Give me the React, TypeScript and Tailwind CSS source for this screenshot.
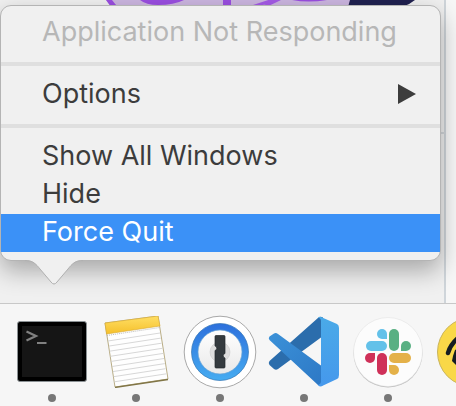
import React from "react";

const rowClass = "flex h-[38px] w-full items-center justify-between pr-6 pb-[2px] pl-[41px] text-left";

function Wallpaper() {
  return (
    <svg className="absolute top-0 left-0" width="456" height="304" aria-hidden="true">
      <rect x="446" y="0" width="10" height="304" fill="#f7f7f7" />
      <rect x="444" y="0" width="2" height="304" fill="#cfd5da" />
      <rect x="440" y="132" width="5" height="2" fill="#d3d7db" />
      <path d="M106 0 L114 10 H360 V0Z" fill="#cbb5df" />
      <path d="M106 0 H112 Q115 4 118 7 H111Z M140 0 Q146 5 158 5 Q174 5 184 0Z M223 0 H231 V7 H223Z M292 0 Q308 3 327 0Z" fill="#9a4ee0" />
      <path d="M252 7 L276 -1 M263 7 L280 -1" stroke="#a45ae6" strokeWidth="3" fill="none" />
      <path d="M350 0 H415 Q409 5 402 7 H348Z" fill="#202150" />
    </svg>
  );
}

function Separator() {
  return <hr className="my-[10px] h-1 border-0 bg-[#dfdfdf]" />;
}

function Terminal() {
  return (
    <svg width="72" height="72" viewBox="0 0 72 72" aria-hidden="true">
      <rect x="1.5" y="5.5" width="69" height="60" rx="2.5" fill="#000" stroke="#8b9194" />
      <rect x="6" y="10" width="60" height="51" fill="#151515" />
      <path d="M10.500 15.500 L20 20 L10.500 24.500" fill="none" stroke="#818181" strokeWidth="2.200" />
      <path d="M21 27 H30.500" stroke="#818181" strokeWidth="2" />
    </svg>
  );
}

function Notes() {
  const lines = [0, 1, 2, 3, 4, 5, 6, 7, 8];
  return (
    <svg width="72" height="72" viewBox="0 0 72 72" aria-hidden="true">
      <defs>
        <linearGradient id="noteTop" x1="0" y1="0" x2="0" y2="1">
          <stop offset="0" stopColor="#ffdf65" />
          <stop offset="1" stopColor="#f5c02b" />
        </linearGradient>
      </defs>
      <path d="M5 7 L58 0 L68 63 L15 71Z" fill="#fefefe" stroke="#b9ad86" />
      <path d="M15 71.500 L68 63.500" stroke="#807546" strokeWidth="1.300" />
      <path d="M5 7 L58 0 L60 10 L6.500 18Z" fill="url(#noteTop)" stroke="#d9aa31" strokeWidth=".6" />
      <path d="M7 19.500 L60 11.500" stroke="#bbb" strokeDasharray="1 1" />
      {lines.map((n) => (
        <path key={n} d="M8 25 L60 17" transform={`translate(${n * 0.8} ${n * 5.1})`} stroke="#d2d2d2" strokeWidth=".9" />
      ))}
    </svg>
  );
}

function OnePassword() {
  return (
    <svg width="74" height="74" viewBox="0 0 74 74" aria-hidden="true">
      <defs>
        <linearGradient id="ring" x1="0" y1="0" x2="0" y2="1">
          <stop offset="0" stopColor="#2d70dc" />
          <stop offset="1" stopColor="#46acf1" />
        </linearGradient>
        <linearGradient id="lock" x1="0" y1="0" x2="0" y2="1">
          <stop offset="0" stopColor="#fff" />
          <stop offset="1" stopColor="#e9e9e9" />
        </linearGradient>
      </defs>
      <circle cx="37" cy="37" r="35.800" fill="#fff" stroke="#a9a9a9" />
      <circle cx="37" cy="37" r="28.500" fill="url(#ring)" stroke="#3475b4" strokeWidth=".7" />
      <circle cx="37" cy="37" r="22" fill="url(#lock)" stroke="#68a3d4" strokeWidth=".7" />
      <circle cx="37" cy="37" r="10" fill="#dedede" stroke="#c5c5c5" strokeWidth=".5" />
      <path d="M33 20.500 H41 Q42 20.500 42 21.500 V38.500 A2.300 2.300 0 0 0 42 43 V52 Q42 53 41 53 H33 Q32 53 32 52 V35.500 A2.300 2.300 0 0 0 32 31 V21.500 Q32 20.500 33 20.500Z" fill="#343a3e" stroke="#22282b" strokeWidth=".7" />
    </svg>
  );
}

function Code() {
  return (
    <svg width="72" height="72" viewBox="0 0 72 72" aria-hidden="true">
      <defs>
        <linearGradient id="codeRight" x1="0" y1="0" x2="0" y2="1">
          <stop offset="0" stopColor="#4aaae8" />
          <stop offset="1" stopColor="#4598ec" />
        </linearGradient>
        <linearGradient id="codeBand" x1="0" y1="0" x2="1" y2="1">
          <stop offset="0" stopColor="#3b91d8" />
          <stop offset="1" stopColor="#2d78c5" />
        </linearGradient>
      </defs>
      <path d="M50.500 1.500 Q52.500 0 55 1.500 V20 L10 53 Q8 54.500 6 53 L1.500 49 Q0 47 1.500 45Z" fill="#2b6dac" />
      <path d="M1.500 24 Q0 22 1.500 20.500 L6 17.500 Q8 16.500 10 18 L55 51 V69 Q52.500 71 50 69Z" fill="url(#codeBand)" />
      <path d="M53 1 L69 8 Q71 9 71 12 V59 Q71 62 69 63 L53 70.500 Q51 70.500 50 69 Q53 68 53 66 V5 Q53 2 50 1.500 Q51 .5 53 1Z" fill="url(#codeRight)" />
    </svg>
  );
}

function Slack() {
  return (
    <svg width="72" height="72" viewBox="0 0 72 72" aria-hidden="true">
      <circle cx="36" cy="37" r="34.500" fill="#bdbdbd" />
      <circle cx="36" cy="36" r="34.500" fill="#fcfcfc" stroke="#dedede" strokeWidth=".5" />
      <g fill="#63c1e9">
        <rect x="14" y="25" width="21" height="10" rx="5" />
        <path d="M35 23 H30 A5 5 0 1 1 35 18Z" />
      </g>
      <g fill="#59b083">
        <rect x="37" y="13" width="10" height="22" rx="5" />
        <path d="M49 35 V30 A5 5 0 1 1 54 35Z" />
      </g>
      <g fill="#e4b149">
        <rect x="37" y="37" width="22" height="10" rx="5" />
        <path d="M37 49 H42 A5 5 0 1 1 37 54Z" />
      </g>
      <g fill="#cf3159">
        <rect x="25" y="37" width="10" height="22" rx="5" />
        <path d="M23 37 V42 A5 5 0 1 1 18 37Z" />
      </g>
    </svg>
  );
}

function YellowApp() {
  return (
    <svg width="72" height="72" viewBox="0 0 72 72" aria-hidden="true">
      <circle cx="36" cy="36" r="34.500" fill="#f9d848" stroke="#c9b45c" />
      <path d="M12 37 Q14 29 22 22" stroke="#151d22" strokeWidth="4.500" fill="none" strokeLinecap="round" />
      <path d="M17 40 L19 34 L24 31 V53 L16 45Z" fill="#151d22" />
    </svg>
  );
}

const apps = [
  { name: "Terminal", icon: <Terminal />, running: true },
  { name: "Notes", icon: <Notes />, running: true },
  { name: "1Password", icon: <OnePassword />, running: true },
  { name: "Visual Studio Code", icon: <Code />, running: true },
  { name: "Slack", icon: <Slack />, running: true },
  { name: "Basecamp", icon: <YellowApp />, running: false },
];

export default function App() {
  return (
    <div className="relative flex h-screen flex-col overflow-hidden bg-[#f0f0f0] font-['Inter','Liberation_Sans',sans-serif] text-[27px] text-[#3c3c3c]">
      <Wallpaper />
      <div className="relative grow pt-[5px] pr-[15px]">
        <div role="menu" className="relative rounded-[11px] border border-[#b4b4b4] bg-[#f0f0f0] py-2 shadow-[0_10px_24px_rgba(0,0,0,0.3)]">
          <button role="menuitem" disabled className={`${rowClass} text-[#b7b7b7]`}>Application Not Responding</button>
          <Separator />
          <button role="menuitem" className={rowClass}>
            Options
            <svg width="18" height="20" viewBox="0 0 18 20" aria-hidden="true"><path d="M0 0 L18 10 L0 20Z" fill="#3c3c3c" /></svg>
          </button>
          <Separator />
          <button role="menuitem" className={rowClass}>Show All Windows</button>
          <button role="menuitem" className={rowClass}>Hide</button>
          <button role="menuitem" className={`${rowClass} bg-[#3b91f7] text-white`}>Force Quit</button>
          <svg className="absolute top-full left-6" width="60" height="26" viewBox="0 0 60 26" aria-hidden="true">
            <path d="M0 0 C8 0 11 4 15 9 L26 22 Q29 26 32 22 L43 9 C47 4 50 0 58 0 V-2 H0Z" fill="#f0f0f0" />
            <path d="M0 .5 C8 .5 11 4 15 9 L26 22 Q29 26 32 22 L43 9 C47 4 50 .5 58 .5" fill="none" stroke="#b0b0b0" />
          </svg>
        </div>
      </div>
      <nav aria-label="Dock" className="relative h-[103px] border-t border-[#c8c8c8] bg-[#f6f6f6]">
        <ul className="flex pt-[11px] pl-[10px]">
          {apps.map((app) => (
            <li key={app.name} className="flex w-[84px] shrink-0 flex-col items-center">
              <button aria-label={app.name} className="flex h-[74px] items-center">{app.icon}</button>
              {app.running && <span className="mt-[5px] size-2 rounded-full bg-[#777]" />}
            </li>
          ))}
        </ul>
      </nav>
    </div>
  );
}
